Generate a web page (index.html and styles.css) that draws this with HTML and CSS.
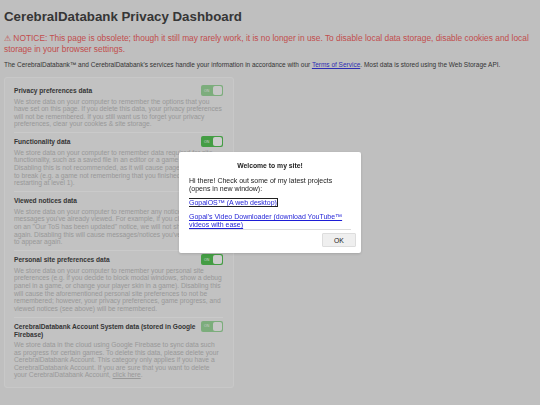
FILE: index.html
```html
<!DOCTYPE html>
<html lang="en">
<head>
    <meta charset="UTF-8">
    <meta name="viewport" content="width=device-width, initial-scale=1.0">
    <title>CerebralDatabank Privacy Dashboard</title>
    <link rel="stylesheet" href="styles.css">
</head>
<body>
    <h1>CerebralDatabank Privacy Dashboard</h1>
    <p class="notice">&#9888; NOTICE: This page is obsolete; though it still may rarely work, it is no longer in use. To disable local data storage, disable cookies and local storage in your browser settings.</p>
    <p class="info">The CerebralDatabank&trade; and CerebralDatabank's services handle your information in accordance with our <a href="#">Terms of Service</a>. Most data is stored using the Web Storage API.</p>

    <div class="card">
        <div class="section">
            <div class="section-head">
                <h2>Privacy preferences data</h2>
                <span class="switch disabled"><span class="switch-label">ON</span><span class="knob"></span></span>
            </div>
            <p class="desc">We store data on your computer to remember the options that you have set on this page. If you delete this data, your privacy preferences will not be remembered. If you still want us to forget your privacy preferences, clear your cookies &amp; site storage.</p>
        </div>
        <div class="section">
            <div class="section-head">
                <h2>Functionality data</h2>
                <span class="switch"><span class="switch-label">ON</span><span class="knob"></span></span>
            </div>
            <p class="desc">We store data on your computer to remember data required for site functionality, such as a saved file in an editor or a game save. Disabling this is not recommended, as it will cause pages and games to break (e.g. a game not remembering that you finished level 1 and restarting at level 1).</p>
        </div>
        <div class="section">
            <div class="section-head">
                <h2>Viewed notices data</h2>
                <span class="switch"><span class="switch-label">ON</span><span class="knob"></span></span>
            </div>
            <p class="desc">We store data on your computer to remember any notices or messages you've already viewed. For example, if you click "Dismiss" on an "Our ToS has been updated" notice, we will not show it to you again. Disabling this will cause messages/notices you've already read to appear again.</p>
        </div>
        <div class="section">
            <div class="section-head">
                <h2>Personal site preferences data</h2>
                <span class="switch"><span class="switch-label">ON</span><span class="knob"></span></span>
            </div>
            <p class="desc">We store data on your computer to remember your personal site preferences (e.g. if you decide to block modal windows, show a debug panel in a game, or change your player skin in a game). Disabling this will cause the aforementioned personal site preferences to not be remembered; however, your privacy preferences, game progress, and viewed notices (see above) will be remembered.</p>
        </div>
        <div class="section">
            <div class="section-head">
                <h2>CerebralDatabank Account System data (stored in Google Firebase)</h2>
                <span class="switch disabled"><span class="switch-label">ON</span><span class="knob"></span></span>
            </div>
            <p class="desc">We store data in the cloud using Google Firebase to sync data such as progress for certain games. To delete this data, please delete your CerebralDatabank Account. This category only applies if you have a CerebralDatabank Account. If you are sure that you want to delete your CerebralDatabank Account, <a href="#">click here</a>.</p>
        </div>
    </div>

    <div class="overlay">
        <div class="modal">
            <h3>Welcome to my site!</h3>
            <div class="modal-body">
                <p>Hi there! Check out some of my latest projects (opens in new window):</p>
                <p><a href="#" class="focused">GopalOS&trade; (A web desktop)</a></p>
                <p><a href="#">Gopal's Video Downloader (download YouTube&trade; videos with ease)</a></p>
            </div>
            <div class="modal-foot">
                <button>OK</button>
            </div>
        </div>
    </div>
</body>
</html>
```

FILE: styles.css
```css
body {
    font-family: 'Liberation Sans', Arial, sans-serif;
    background-color: #efefef;
    margin: 0;
    padding: 0 4px;
    color: #444;
}

a {
    color: #3a3ae0;
}

h1 {
    font-size: 13.3px;
    line-height: 15px;
    margin: 9px 0 8.5px;
    color: #444;
}

.notice {
    font-size: 8.4px;
    line-height: 11px;
    color: #f26262;
    margin: 0 0 6.5px;
}

.info {
    font-size: 6.5px;
    line-height: 8px;
    margin: 0 0 8px;
}

.card {
    width: 209px;
    background-color: #f3f3f3;
    border: 1px solid #fbfbfb;
    border-radius: 3px;
    padding: 4px 10px 4px 9px;
}

.section {
    padding: 3px 0 4.5px;
    border-top: 1px solid #fdfdfd;
}

.section:first-child {
    border-top: none;
}

.section-head {
    display: flex;
    justify-content: space-between;
    align-items: flex-start;
    gap: 4px;
}

h2 {
    font-size: 6.6px;
    line-height: 8.3px;
    margin: 2px 0 0;
    color: #444;
}

.desc {
    font-size: 6.7px;
    line-height: 7.6px;
    color: #c0c0c0;
    margin: 1.5px 0 0;
}

.desc a {
    color: #c0c0c0;
}

.switch {
    flex: none;
    display: flex;
    align-items: center;
    justify-content: space-between;
    width: 22px;
    height: 11px;
    box-sizing: border-box;
    padding: 1px;
    background-color: #55c555;
    border-radius: 2px;
}

.switch.disabled {
    opacity: 0.55;
}

.switch-label {
    font-size: 3.5px;
    color: #fff;
    padding-left: 2px;
}

.knob {
    width: 9px;
    height: 9px;
    background-color: #fff;
    border-radius: 2px;
}

.overlay {
    position: fixed;
    inset: 0;
    background-color: rgba(0, 0, 0, 0.2);
    display: flex;
    justify-content: center;
    align-items: center;
}

.modal {
    width: 182px;
    background-color: white;
    border-radius: 2px;
    box-shadow: 0 1px 3px rgba(0, 0, 0, 0.15);
    font-size: 7px;
    line-height: 8px;
    color: #222;
}

.modal h3 {
    font-size: 6.8px;
    line-height: 8px;
    text-align: center;
    margin: 0;
    padding: 10px 10px 7px;
}

.modal-body {
    margin: 0 10px;
    height: 52px;
    overflow: hidden;
    border-bottom: 1px solid #ddd;
}

.modal-body p {
    margin: 0 0 6px;
}

.modal-body a {
    color: #1e1ed6;
}

.modal-body a.focused {
    outline: 1px solid #222;
}

.modal-foot {
    display: flex;
    justify-content: flex-end;
    padding: 3px 5px 6px;
}

button {
    font-family: 'Liberation Sans', Arial, sans-serif;
    font-size: 6.8px;
    width: 34px;
    height: 14px;
    padding: 0;
    background-color: #efefef;
    color: #222;
    border: 1px solid #ddd;
    border-radius: 1px;
}
```
